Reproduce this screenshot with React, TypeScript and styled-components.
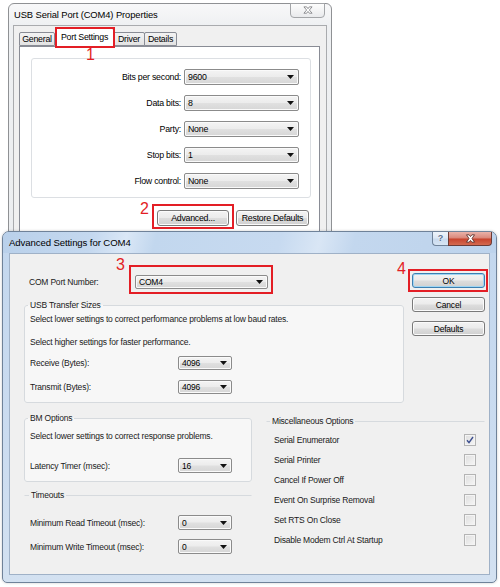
import React from "react";
import styled, { createGlobalStyle } from "styled-components";

const RED = "#e31e25";
const UI = `'Liberation Sans', Arial, sans-serif`;

const GlobalStyle = createGlobalStyle`
  html, body { margin: 0; padding: 0; background: #ffffff; }
  body { width: 500px; height: 587px; overflow: hidden; }
`;

const Desktop = styled.div`
  position: relative;
  width: 500px;
  height: 587px;
  overflow: hidden;
  background: #ffffff;
  font-family: ${UI};
  color: #000;
`;

/* ---------- annotations (red boxes + numbers lying over the UI) ---------- */
const Marked = styled.div<{ $t: number; $r: number; $b: number; $l: number }>`
  position: relative;
  display: flex;
  z-index: 2;
  &::after {
    content: "";
    position: absolute;
    top: ${(p) => -p.$t}px;
    right: ${(p) => -p.$r}px;
    bottom: ${(p) => -p.$b}px;
    left: ${(p) => -p.$l}px;
    border: 2px solid ${RED};
    pointer-events: none;
  }
`;
const TabMark = styled(Marked)`
  margin-bottom: -1px;
`;
const MarkNum = styled.span<{ $x: number; $y: number }>`
  position: absolute;
  left: ${(p) => p.$x}px;
  top: ${(p) => p.$y}px;
  font: 16px/16px ${UI};
  letter-spacing: 0;
  color: ${RED};
`;

/* ---------- shared controls ---------- */
const ComboBox = styled.div<{ $w: number; $h: number }>`
  width: ${(p) => p.$w}px;
  height: ${(p) => p.$h}px;
  box-sizing: border-box;
  display: flex;
  align-items: center;
  justify-content: space-between;
  padding: 0 4px 0 3px;
  border: 1px solid #8b8b8b;
  border-radius: 2px;
  background: linear-gradient(#f4f4f4 0%, #ececec 48%, #e0e0e0 52%, #d6d6d6 100%);
  box-shadow: inset 0 0 0 1px #fafafa;
  color: #000;
  white-space: nowrap;
`;
const Arrow = () => (
  <svg width="7" height="4" viewBox="0 0 7 4">
    <path d="M0 0h7L3.5 4z" fill="#111" />
  </svg>
);
const Combo = ({ value, w, h }: { value: string; w: number; h: number }) => (
  <ComboBox $w={w} $h={h}>
    <span>{value}</span>
    <Arrow />
  </ComboBox>
);

const PushButton = styled.button<{ $w: number; $h: number; $default?: boolean }>`
  width: ${(p) => p.$w}px;
  height: ${(p) => p.$h}px;
  box-sizing: border-box;
  padding: 0;
  display: flex;
  align-items: center;
  justify-content: center;
  border: 1px solid ${(p) => (p.$default ? "#3c7fb1" : "#7a7a7a")};
  border-radius: 3px;
  background: linear-gradient(#f3f3f3 0%, #ebebeb 48%, #dddddd 52%, #d0d0d0 100%);
  box-shadow: inset 0 0 0 1px ${(p) => (p.$default ? "#9fd5f3" : "#fbfbfb")};
  font: inherit;
  letter-spacing: inherit;
  color: #000;
  white-space: nowrap;
`;

/* ---------- window 1: properties (Win7 basic frame) ---------- */
const PropWindow = styled.div`
  position: absolute;
  left: 8px;
  top: 3px;
  width: 324px;
  height: 252px;
  box-sizing: border-box;
  border: 1px solid #8f9194;
  border-radius: 6px 6px 0 0;
  background: linear-gradient(#f8f8f9 0px, #eef0f2 22px, #eceef0 100%);
  padding: 0 4px;
  display: flex;
  flex-direction: column;
  font-size: 8.8px;
  letter-spacing: -0.25px;
`;
const PropTitleBar = styled.div`
  height: 21px;
  margin: 0 -4px;
  padding-left: 5px;
  display: flex;
  align-items: flex-start;
  justify-content: space-between;
`;
const PropTitle = styled.span`
  font-size: 9.4px;
  letter-spacing: -0.1px;
  line-height: 21px;
  color: #000;
`;
const BasicClose = styled.div`
  width: 35px;
  height: 15px;
  margin-top: -1px;
  margin-right: 6px;
  box-sizing: border-box;
  border: 1px solid #a3a5a8;
  border-radius: 0 0 4px 4px;
  background: linear-gradient(#fdfdfd, #e9eaec);
  display: flex;
  align-items: center;
  justify-content: center;
`;
const PropClient = styled.div`
  flex: 1;
  background: #f0f0f0;
  border: 1px solid #a9abae;
  border-bottom: none;
  padding: 2px 6px 0 5px;
  display: flex;
  flex-direction: column;
`;
const TabStrip = styled.div`
  height: 18px;
  padding-left: 1px;
  display: flex;
  align-items: flex-end;
`;
const Tab = styled.div<{ $w: number; $active?: boolean }>`
  width: ${(p) => p.$w}px;
  height: ${(p) => (p.$active ? 19 : 14)}px;
  box-sizing: border-box;
  border: 1px solid #898c95;
  border-bottom: ${(p) => (p.$active ? "none" : "1px solid #898c95")};
  border-radius: 2px 2px 0 0;
  background: ${(p) => (p.$active ? "#ffffff" : "linear-gradient(#f3f3f3, #e3e3e3)")};
  display: flex;
  align-items: center;
  justify-content: center;
  padding-bottom: ${(p) => (p.$active ? 2 : 0)}px;
  color: #000;
  white-space: nowrap;
  margin-left: ${(p) => (p.$active ? 0 : -1)}px;
`;
const TabPanel = styled.div`
  flex: 1;
  background: #ffffff;
  border: 1px solid #898c95;
  padding: 11px 8px 0 11px;
`;
const SettingsGroup = styled.div`
  height: 140px;
  box-sizing: border-box;
  border: 1px solid #dcdfe3;
  border-radius: 3px;
  padding: 10px 11px 0 0;
  display: grid;
  grid-template-columns: 1fr 115px;
  grid-auto-rows: 16px;
  column-gap: 3px;
  row-gap: 10px;
  align-items: center;
`;
const SettingLabel = styled.span`
  justify-self: end;
  white-space: nowrap;
`;
const PanelButtons = styled.div`
  margin-top: 7px;
  padding-right: 2px;
  height: 26px;
  display: flex;
  align-items: center;
  justify-content: flex-end;
  gap: 7px;
`;

/* ---------- window 2: advanced settings (Aero frame) ---------- */
const AdvWindow = styled.div`
  position: absolute;
  left: 2px;
  top: 231px;
  width: 495px;
  height: 352px;
  box-sizing: border-box;
  border: 1px solid #6f8299;
  border-radius: 7px 7px 5px 5px;
  background: linear-gradient(#c3d7ee, #cbdcf0 60%, #d3e1f1);
  padding: 0 6px 7px;
  display: flex;
  flex-direction: column;
  box-shadow: 0 0 3px rgba(0, 0, 0, 0.2);
  font-size: 8.5px;
  letter-spacing: -0.2px;
`;
const AdvTitleBar = styled.div`
  height: 21px;
  margin: 0 -6px;
  padding-left: 6px;
  border-radius: 6px 6px 0 0;
  background: linear-gradient(
    104deg,
    #b9d0ea 0%,
    #c4d8ef 18%,
    #dae7f6 25%,
    #c2d7ee 31%,
    #c7daf0 56%,
    #d9e6f5 64%,
    #c3d7ee 71%,
    #bdd3ec 100%
  );
  display: flex;
  align-items: flex-start;
  justify-content: space-between;
`;
const AdvTitle = styled.span`
  font-size: 9.6px;
  letter-spacing: -0.1px;
  line-height: 21px;
  color: #000;
`;
const CaptionGroup = styled.div`
  display: flex;
  margin-right: 4px;
`;
const HelpButton = styled.div`
  width: 16px;
  height: 14px;
  box-sizing: border-box;
  border: 1px solid #6f8299;
  border-top: none;
  border-right: none;
  border-radius: 0 0 0 4px;
  background: linear-gradient(#eef4fb 0%, #dde8f5 45%, #c9daee 55%, #d8e5f3 100%);
  display: flex;
  align-items: center;
  justify-content: center;
  font: bold 9px/1 ${UI};
  color: #5a6f8c;
  text-shadow: 0 0 2px #fff;
`;
const CloseButton = styled.div`
  width: 44px;
  height: 14px;
  box-sizing: border-box;
  border: 1px solid #6b3b36;
  border-top: none;
  border-radius: 0 0 4px 0;
  background: linear-gradient(#e9b2a8 0%, #db8c7f 42%, #c8462f 56%, #d46a50 100%);
  display: flex;
  align-items: center;
  justify-content: center;
`;
const AdvClient = styled.div`
  flex: 1;
  background: #f0f0f0;
  border: 1px solid #9fb1c7;
  overflow: hidden;
  display: flex;
  flex-direction: column;
  color: #1a1a1a;
`;
const TopSection = styled.div`
  display: flex;
  align-items: flex-start;
`;
const TopMain = styled.div`
  width: 394px;
  box-sizing: border-box;
  padding-left: 14px;
  display: flex;
  flex-direction: column;
`;
const ComRow = styled.div`
  margin: 21px 0 0 5px;
  height: 14px;
  display: flex;
  align-items: center;
`;
const ComLabel = styled.span`
  width: 106px;
  white-space: nowrap;
`;
const ButtonColumn = styled.div`
  margin-left: 8px;
  padding-top: 19px;
  display: flex;
  flex-direction: column;
  gap: 9px;
`;
const Group = styled.fieldset<{
  $boxed?: boolean;
  $w: number;
  $pl: number;
  $pr?: number;
  $pb?: number;
  $mt?: number;
  $ml?: number;
}>`
  margin: ${(p) => p.$mt ?? 0}px 0 0 ${(p) => p.$ml ?? 0}px;
  padding: 0 ${(p) => p.$pr ?? 0}px ${(p) => p.$pb ?? 0}px ${(p) => p.$pl}px;
  width: ${(p) => p.$w}px;
  box-sizing: border-box;
  min-inline-size: 0;
  border: 1px solid ${(p) => (p.$boxed ? "#d6dade" : "transparent")};
  border-top-color: #d6dade;
  border-radius: ${(p) => (p.$boxed ? 3 : 0)}px;
  background: ${(p) => (p.$boxed ? "#f7f7f7" : "transparent")};
  display: flex;
  flex-direction: column;
`;
const Legend = styled.legend<{ $ml: number }>`
  padding: 0 2px;
  margin-left: ${(p) => p.$ml}px;
  line-height: 10px;
  color: #1a1a1a;
  white-space: nowrap;
`;
const TextLine = styled.div<{ $mt?: number }>`
  height: 18px;
  line-height: 18px;
  margin-top: ${(p) => p.$mt ?? 0}px;
  white-space: nowrap;
`;
const FieldRow = styled.div<{ $mt?: number; $h: number }>`
  height: ${(p) => p.$h}px;
  margin-top: ${(p) => p.$mt ?? 0}px;
  display: grid;
  grid-template-columns: 148px 54px;
  align-items: center;
  white-space: nowrap;
`;
const BottomSection = styled.div`
  margin-top: 10px;
  padding-left: 14px;
  display: flex;
  align-items: flex-start;
`;
const LeftColumn = styled.div`
  width: 228px;
  display: flex;
  flex-direction: column;
`;
const CheckRow = styled.div<{ $mt?: number }>`
  height: 20px;
  margin-top: ${(p) => p.$mt ?? 0}px;
  display: flex;
  align-items: center;
  justify-content: space-between;
  white-space: nowrap;
`;
const CheckBox = styled.div`
  width: 12px;
  height: 12px;
  box-sizing: border-box;
  border: 1px solid #b4b4b4;
  background: linear-gradient(135deg, #dedede, #f6f6f6);
  box-shadow: inset 0 0 0 1px #f4f4f4;
  display: flex;
  align-items: center;
  justify-content: center;
`;

const miscOptions: { label: string; checked: boolean }[] = [
  { label: "Serial Enumerator", checked: true },
  { label: "Serial Printer", checked: false },
  { label: "Cancel If Power Off", checked: false },
  { label: "Event On Surprise Removal", checked: false },
  { label: "Set RTS On Close", checked: false },
  { label: "Disable Modem Ctrl At Startup", checked: false },
];

const portRows = [
  { label: "Bits per second:", value: "9600" },
  { label: "Data bits:", value: "8" },
  { label: "Party:", value: "None" },
  { label: "Stop bits:", value: "1" },
  { label: "Flow control:", value: "None" },
];

export default function App() {
  return (
    <>
      <GlobalStyle />
      <Desktop>
        <PropWindow>
          <PropTitleBar>
            <PropTitle>USB Serial Port (COM4) Properties</PropTitle>
            <BasicClose>
              <svg width="10" height="9" viewBox="0 0 11 9">
                <path
                  d="M1 .5h3l1.5 2 1.5-2h3l-3 3.5 3 3.5h-3l-1.5-2-1.5 2h-3l3-3.5z"
                  fill="#ffffff"
                  stroke="#7a7c80"
                  strokeWidth="0.9"
                  strokeLinejoin="round"
                />
              </svg>
            </BasicClose>
          </PropTitleBar>
          <PropClient>
            <TabStrip>
              <Tab $w={36}>General</Tab>
              <TabMark $t={1} $r={1} $b={1} $l={0}>
                <Tab $w={59} $active>
                  Port Settings
                </Tab>
                <MarkNum $x={31} $y={19}>1</MarkNum>
              </TabMark>
              <Tab $w={32}>Driver</Tab>
              <Tab $w={33}>Details</Tab>
            </TabStrip>
            <TabPanel>
              <SettingsGroup>
                {portRows.map((r) => (
                  <React.Fragment key={r.label}>
                    <SettingLabel>{r.label}</SettingLabel>
                    <Combo value={r.value} w={115} h={16} />
                  </React.Fragment>
                ))}
              </SettingsGroup>
              <PanelButtons>
                <Marked $t={6} $r={5} $b={3} $l={5}>
                  <PushButton $w={72} $h={16}>
                    Advanced...
                  </PushButton>
                  <MarkNum $x={-17} $y={-9}>2</MarkNum>
                </Marked>
                <PushButton $w={73} $h={16}>
                  Restore Defaults
                </PushButton>
              </PanelButtons>
            </TabPanel>
          </PropClient>
        </PropWindow>

        <AdvWindow>
          <AdvTitleBar>
            <AdvTitle>Advanced Settings for COM4</AdvTitle>
            <CaptionGroup>
              <HelpButton>?</HelpButton>
              <CloseButton>
                <svg width="11" height="9" viewBox="0 0 11 9">
                  <path
                    d="M1.5 .8h2.6l1.4 1.8 1.4-1.8h2.6L7 4.5l2.5 3.7H6.9L5.5 6.4 4.1 8.2H1.5L4 4.5z"
                    fill="#ffffff"
                    stroke="#4b2420"
                    strokeWidth="0.8"
                    strokeLinejoin="round"
                  />
                </svg>
              </CloseButton>
            </CaptionGroup>
          </AdvTitleBar>
          <AdvClient>
            <TopSection>
              <TopMain>
                <ComRow>
                  <ComLabel>COM Port Number:</ComLabel>
                  <Marked $t={10} $r={5} $b={5} $l={6}>
                    <Combo value="COM4" w={133} h={14} />
                    <MarkNum $x={-19} $y={-18}>3</MarkNum>
                  </Marked>
                </ComRow>
                <Group $boxed $w={380} $pl={5} $pb={8} $mt={11}>
                  <Legend $ml={-2}>USB Transfer Sizes</Legend>
                  <TextLine>Select lower settings to correct performance problems at low baud rates.</TextLine>
                  <TextLine $mt={5}>Select higher settings for faster performance.</TextLine>
                  <FieldRow $h={14} $mt={5}>
                    <span>Receive (Bytes):</span>
                    <Combo value="4096" w={54} h={14} />
                  </FieldRow>
                  <FieldRow $h={14} $mt={10}>
                    <span>Transmit (Bytes):</span>
                    <Combo value="4096" w={54} h={14} />
                  </FieldRow>
                </Group>
              </TopMain>
              <ButtonColumn>
                <Marked $t={4} $r={3} $b={4} $l={4}>
                  <PushButton $w={73} $h={15} $default>
                    OK
                  </PushButton>
                  <MarkNum $x={-15} $y={-12}>4</MarkNum>
                </Marked>
                <PushButton $w={73} $h={15}>
                  Cancel
                </PushButton>
                <PushButton $w={73} $h={15}>
                  Defaults
                </PushButton>
              </ButtonColumn>
            </TopSection>
            <BottomSection>
              <LeftColumn>
                <Group $boxed $w={228} $pl={5} $pb={8}>
                  <Legend $ml={-2}>BM Options</Legend>
                  <TextLine $mt={4}>Select lower settings to correct response problems.</TextLine>
                  <FieldRow $h={15} $mt={13}>
                    <span>Latency Timer (msec):</span>
                    <Combo value="16" w={54} h={15} />
                  </FieldRow>
                </Group>
                <Group $w={228} $pl={5} $mt={8}>
                  <Legend $ml={-1}>Timeouts</Legend>
                  <FieldRow $h={15} $mt={15}>
                    <span>Minimum Read Timeout (msec):</span>
                    <Combo value="0" w={54} h={15} />
                  </FieldRow>
                  <FieldRow $h={15} $mt={9}>
                    <span>Minimum Write Timeout (msec):</span>
                    <Combo value="0" w={54} h={15} />
                  </FieldRow>
                </Group>
              </LeftColumn>
              <Group $w={219} $pl={7} $pr={8} $mt={3} $ml={14}>
                <Legend $ml={-4}>Miscellaneous Options</Legend>
                {miscOptions.map((o, i) => (
                  <CheckRow key={o.label} $mt={i === 0 ? 4 : 0}>
                    <span>{o.label}</span>
                    <CheckBox>
                      {o.checked && (
                        <svg width="8" height="8" viewBox="0 0 8 8">
                          <path d="M1 4.2 3 6.6 7 1" fill="none" stroke="#3d4f8f" strokeWidth="1.4" />
                        </svg>
                      )}
                    </CheckBox>
                  </CheckRow>
                ))}
              </Group>
            </BottomSection>
          </AdvClient>
        </AdvWindow>
      </Desktop>
    </>
  );
}
